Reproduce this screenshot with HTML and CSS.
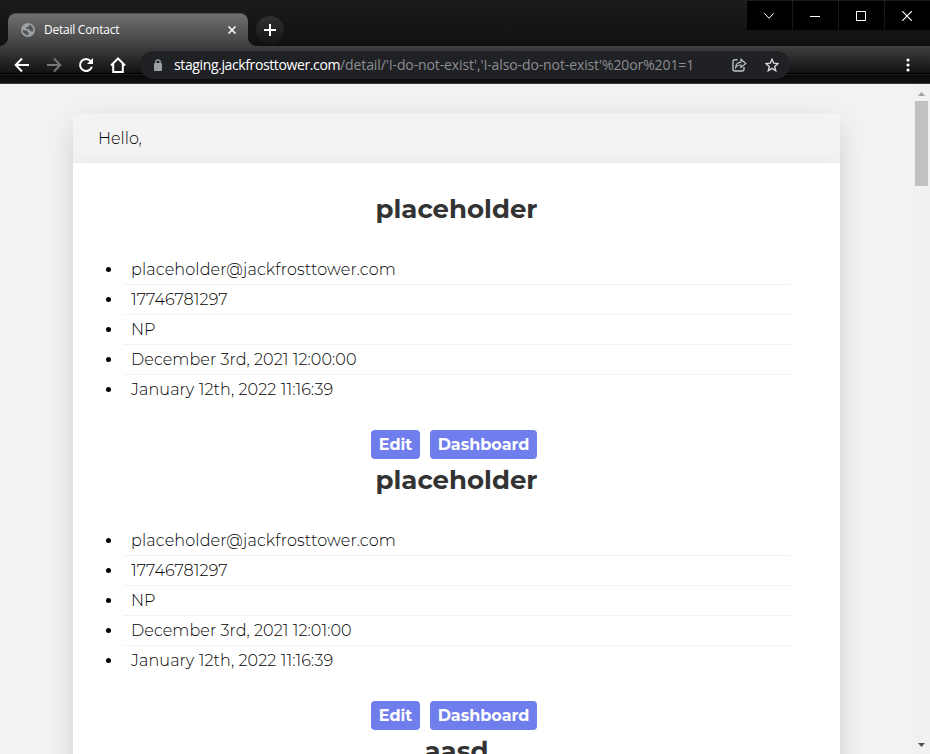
FILE: index.html
```
<!DOCTYPE html>
<html lang="en">
<head>
<meta charset="utf-8">
<title>Detail Contact</title>
<link rel="stylesheet" href="styles.css">
</head>
<body>
<div class="browser">
  <header class="tabstrip">
    <div class="tab">
      <svg class="globe" width="14" height="14" viewBox="0 0 14 14"><circle cx="7" cy="7" r="7" fill="#9aa0a6"/><path d="M1.7 6.4 4.4 7.4Q6.4 7 6.8 9L8 9.6 7.2 12.3A5.4 5.4 0 0 1 1.7 6.4ZM8.3 1.8 7.4 3.8 5.3 4.3 5.5 6 8.2 6.2 9.6 8.2 12 8.6A5.5 5.5 0 0 0 8.3 1.8Z" fill="#555"/></svg>
      <span class="tab-title">Detail Contact</span>
      <svg class="tab-close" width="8" height="8" viewBox="0 0 8 8"><path d="m.5.5 7 7m0-7-7 7" stroke="#fff" stroke-width="1.5"/></svg>
    </div>
    <div class="new-tab"><svg width="12" height="12" viewBox="0 0 12 12"><path d="M6 0v12M0 6h12" stroke="#fff" stroke-width="2"/></svg></div>
    <div class="window-controls">
      <span><svg width="10" height="6" viewBox="0 0 10 6"><path d="m.3.3 4.7 5 4.7-5" fill="none" stroke="#fff"/></svg></span>
      <span><svg width="10" height="10" viewBox="0 0 10 10"><path d="M0 5.5h10" stroke="#fff"/></svg></span>
      <span><svg width="10" height="10" viewBox="0 0 10 10"><path d="M.5.5h9v9h-9z" fill="none" stroke="#fff"/></svg></span>
      <span><svg width="10" height="10" viewBox="0 0 10 10"><path d="m.2.2 9.6 9.6m0-9.6L.2 9.8" stroke="#fff" stroke-width="1.2"/></svg></span>
    </div>
  </header>
  <div class="toolbar">
    <nav class="nav-icons">
      <svg width="16" height="16" viewBox="0 0 16 16"><path d="M15 8H2M8 1.5 1.7 8 8 14.5" fill="none" stroke="#fff" stroke-width="2"/></svg>
      <svg width="16" height="16" viewBox="0 0 16 16"><path d="M1 8h13M8 1.5 14.3 8 8 14.5" fill="none" stroke="#777" stroke-width="2"/></svg>
      <svg width="16" height="16" viewBox="0 0 16 16"><path d="M12.7 4.1A6 6 0 1 0 13.8 9.7" fill="none" stroke="#fff" stroke-width="2"/><path d="M15 1v6H9z" fill="#fff"/></svg>
      <svg width="16" height="16" viewBox="0 0 16 16"><path d="M1 8.5 8 1.5l7 7M3.2 7v8h9.6V7" fill="none" stroke="#fff" stroke-width="2"/></svg>
    </nav>
    <div class="omnibox">
      <svg class="lock" width="8" height="12" viewBox="0 0 8 12"><rect y="4" width="8" height="8" rx="1" fill="#9aa0a6"/><path d="M1.8 5V3a2.2 2.2 0 0 1 4.4 0v2" fill="none" stroke="#9aa0a6" stroke-width="1.3"/></svg>
      <span class="host">staging.jackfrosttower.com</span><span class="path">/detail/'I-do-not-exist','I-also-do-not-exist'%20or%201=1</span>
      <svg class="share" width="15" height="14" viewBox="0 0 15 14"><path d="M5.5 1.7H3Q1 1.7 1 3.7V11q0 2 2 2h7q2 0 2-2V9" fill="none" stroke="#bdc1c6" stroke-width="1.4"/><path d="M3.7 9.5Q4 4.5 9 4.2V1.2l4.8 4.3L9 9.5V7Q5.5 6.8 3.7 9.5Z" fill="none" stroke="#bdc1c6" stroke-width="1.2"/></svg>
      <svg class="star" width="14" height="14" viewBox="0 0 14 14"><path d="m7 1.2 1.7 4 4.3.4-3.3 2.8 1 4.3L7 10.4l-3.7 2.3 1-4.3L1 5.6l4.3-.4z" fill="none" stroke="#d5d7da" stroke-width="1.4"/></svg>
    </div>
    <svg class="menu" width="4" height="14" viewBox="0 0 4 14" fill="#fff"><circle cx="2" cy="2" r="1.6"/><circle cx="2" cy="7" r="1.6"/><circle cx="2" cy="12" r="1.6"/></svg>
  </div>
  <div class="viewport">
    <main class="page">
      <section class="card">
        <div class="card-header"><span class="hello">Hello,</span></div>
        <div class="card-body">
          <article class="contact">
            <h1>placeholder</h1>
            <ul>
              <li><span class="email">placeholder@jackfrosttower.com</span></li>
              <li><span class="phone">17746781297</span></li>
              <li><span class="country">NP</span></li>
              <li><span class="created">December 3rd, 2021 12:00:00</span></li>
              <li><span class="updated">January 12th, 2022 11:16:39</span></li>
            </ul>
            <div class="actions"><a class="edit"><span>Edit</span></a><a class="dashboard"><span>Dashboard</span></a></div>
          </article>
          <article class="contact">
            <h1>placeholder</h1>
            <ul>
              <li><span class="email">placeholder@jackfrosttower.com</span></li>
              <li><span class="phone">17746781297</span></li>
              <li><span class="country">NP</span></li>
              <li><span class="created">December 3rd, 2021 12:01:00</span></li>
              <li><span class="updated">January 12th, 2022 11:16:39</span></li>
            </ul>
            <div class="actions"><a class="edit"><span>Edit</span></a><a class="dashboard"><span>Dashboard</span></a></div>
          </article>
          <article class="contact"><h1>aasd</h1></article>
        </div>
      </section>
    </main>
    <aside class="scrollbar">
      <svg width="7" height="4" viewBox="0 0 7 4"><path d="M3.5 0 7 4H0z" fill="#a3a3a3"/></svg>
      <div class="thumb"></div>
      <svg class="down" width="7" height="4" viewBox="0 0 7 4"><path d="M0 0h7L3.5 4z" fill="#505050"/></svg>
    </aside>
  </div>
</div>
</body>
</html>
```

FILE: styles.css
```
* { box-sizing: border-box; }
body { margin: 0; font-family: Montserrat, Inter, sans-serif; overflow: hidden; }
svg { display: block; flex: none; }
.browser { width: 930px; height: 754px; display: flex; flex-direction: column; background: #f2f2f2; overflow: hidden; }

.tabstrip { height: 46px; flex: none; display: flex; align-items: flex-start; padding-left: 8px; background: linear-gradient(#1c1c1c, #101010); }
.tab { position: relative; width: 240px; height: 33px; margin-top: 13px; padding: 0 12px 1px 13px; display: flex; align-items: center; border-radius: 8px 8px 0 0; background: linear-gradient(#707070, #3f3f3f); border-top: 1px solid #555; }
.tab::before, .tab::after { content: ""; position: absolute; bottom: 0; width: 8px; height: 8px; }
.tab::before { left: -8px; background: radial-gradient(circle at 0 0, transparent 7.5px, #404040 8px); }
.tab::after { right: -8px; background: radial-gradient(circle at 100% 0, transparent 7.5px, #404040 8px); }
.tab-title { margin-left: 9px; flex: 1; font: 12px "Open Sans", sans-serif; color: #fff; letter-spacing: -.25px; white-space: nowrap; }
.new-tab { width: 28px; height: 28px; margin: 16px 0 0 8px; border-radius: 50%; display: grid; place-items: center; background: linear-gradient(#303030, #151515); }
.window-controls { display: flex; gap: 1px; margin: 1px 0 0 auto; }
.window-controls span { width: 45px; height: 29px; padding-right: 2px; background: #000; display: grid; place-items: center; }

.toolbar { height: 38px; flex: none; display: flex; align-items: center; padding: 0 20px 0 14px; border-bottom: 1px solid #383838; background: linear-gradient(#3f3f3f 0, #121212 27px, #000 27px, #000 28px, #1c1c1c 28px, #1c1c1c 29px, #0a0a0a 29px, #101010 37px); }
.nav-icons { display: flex; gap: 16px; }
.omnibox { width: 650px; height: 28px; margin-left: 14px; margin-top: 1px; padding: 0 11px 0 14px; border-radius: 14px; background: #202124; display: flex; align-items: center; font: 14px "Open Sans", sans-serif; white-space: nowrap; }
.host, .path { padding-bottom: 1px; }
.host { margin-left: 12px; color: #fff; letter-spacing: -.38px; }
.path { color: #8b8e92; letter-spacing: -.11px; }
.share { margin-left: auto; }
.star { margin-left: 18px; }
.menu { margin-left: auto; }

.viewport { flex: 1; min-height: 0; display: flex; }
.page { flex: 1; padding: 29px 73px 0; overflow: hidden; }
.card { width: 767px; height: 900px; background: #f3f3f3; border-top: 1px solid #efefef; box-shadow: 0 10px 28px -3px rgba(0,0,0,.17); }
.card-header { height: 49px; padding: 15px 25px 0; font-size: 16px; font-weight: 300; line-height: 20px; color: #000; }
.card-body { height: 850px; padding: 22px 50px 0 51px; background: #fff; box-shadow: 0 0 16px rgba(0,0,0,.06); clip-path: inset(-24px 0 0 0); }
.contact { height: 271px; }
h1 { margin: 0 1px 0 0; text-align: center; font-size: 26px; line-height: 48px; font-weight: 700; color: #333; }
ul { margin: 22px 0 0; padding: 0; list-style: none; }
li { height: 30px; padding-left: 7px; display: flex; align-items: center; position: relative; font-size: 16px; font-weight: 300; color: #000; border-bottom: 1px solid #f2f2f2; white-space: nowrap; }
li:last-child { border-bottom-color: transparent; }
li::before { content: ""; position: absolute; left: -18px; top: 12px; width: 5px; height: 5px; border-radius: 50%; background: #000; }
.email { letter-spacing: .15px; }
.phone { letter-spacing: .08px; }
.created { letter-spacing: .08px; }
.updated { letter-spacing: .12px; }
.actions { display: flex; justify-content: center; gap: 10px; margin-top: 25px; padding-right: 6px; }
.actions a { height: 29px; border-radius: 4px; background: #6f7eec; color: #fff; font-size: 16px; font-weight: 700; display: grid; place-items: center; }
.edit { width: 49px; }
.dashboard { width: 107px; }

.scrollbar { width: 17px; margin-left: -17px; padding: 8px 0 7px; background: #f1f1f1; display: flex; flex-direction: column; align-items: center; }
.thumb { width: 13px; height: 85px; margin-top: 5px; background: #c1c1c1; }
.down { margin-top: auto; }
```
